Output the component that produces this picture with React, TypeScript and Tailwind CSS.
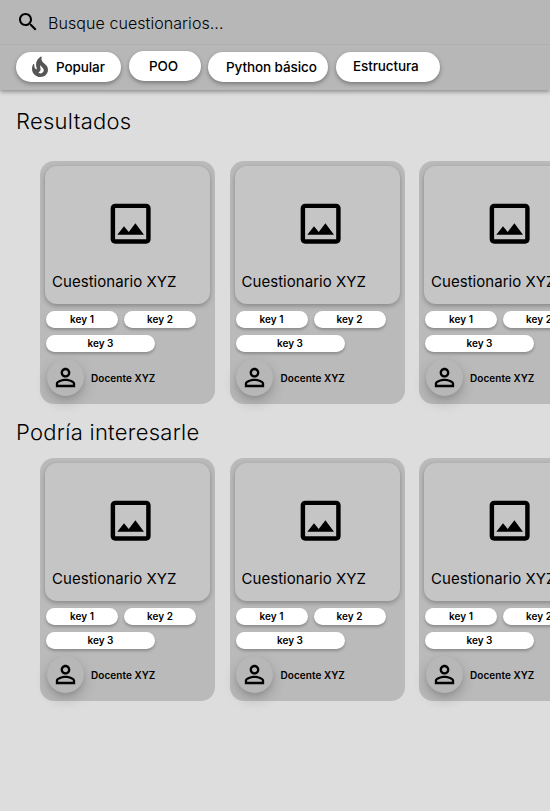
import React from 'react';

function SearchIcon() {
  return (
    <svg viewBox="0 0 24 24" className="h-6 w-6 shrink-0 fill-black">
      <path d="M15.5 14h-.79l-.28-.27C15.41 12.59 16 11.11 16 9.5 16 5.91 13.09 3 9.5 3S3 5.91 3 9.5 5.91 16 9.5 16c1.61 0 3.09-.59 4.23-1.57l.27.28v.79l5 4.99L20.49 19l-4.99-5zm-6 0C7.01 14 5 11.99 5 9.5S7.01 5 9.5 5 14 7.01 14 9.5 11.99 14 9.5 14z" />
    </svg>
  );
}

function FlameIcon() {
  return (
    <svg viewBox="0 0 24 24" className="h-6 w-6 shrink-0 fill-[#555]">
      <path d="M19.48 12.35c-1.57-4.08-7.16-4.3-5.81-10.23.1-.44-.37-.78-.75-.55C9.29 3.71 6.68 8 8.87 13.62c.18.46-.36.89-.75.59-1.81-1.37-2-3.34-1.84-4.75.06-.52-.62-.77-.91-.34C4.69 10.16 4 11.84 4 14.37c.38 5.6 5.11 7.32 6.81 7.54 2.43.31 5.06-.14 6.95-1.87 2.08-1.93 2.84-5.01 1.72-7.69zm-9.28 5.03c1.44-.35 2.18-1.39 2.38-2.31.33-1.43-.96-2.83-.09-5.09.33 1.87 3.27 3.04 3.27 5.08.08 2.53-2.66 4.7-5.56 2.32z" />
    </svg>
  );
}

function PictureIcon() {
  return (
    <svg viewBox="0 0 24 24" className="ml-[59px] h-[53.3px] w-[53.3px] fill-black">
      <path d="M19 5v14H5V5h14m0-2H5c-1.1 0-2 .9-2 2v14c0 1.1.9 2 2 2h14c1.1 0 2-.9 2-2V5c0-1.1-.9-2-2-2zm-4.86 8.86l-3 3.87L9 13.14 6 17h12l-3.86-5.14z" />
    </svg>
  );
}

function PersonIcon() {
  return (
    <svg viewBox="0 0 24 24" className="h-[29px] w-[29px] fill-black">
      <path d="M12 5.9c1.16 0 2.1.94 2.1 2.1s-.94 2.1-2.1 2.1S9.9 9.16 9.9 8s.94-2.1 2.1-2.1m0 9c2.97 0 6.1 1.46 6.1 2.1v1.1H5.9V17c0-.64 3.13-2.1 6.1-2.1M12 4C9.79 4 8 5.79 8 8s1.79 4 4 4 4-1.79 4-4-1.79-4-4-4zm0 9c-2.67 0-8 1.34-8 4v3h16v-3c0-2.66-5.33-4-8-4z" />
    </svg>
  );
}

const chip =
  'flex h-[30px] shrink-0 items-center rounded-full bg-white text-[13.5px] font-medium tracking-[-0.1px] shadow-[0_2px_4px_rgba(0,0,0,0.35)]';
const tag =
  'flex h-[17px] items-center justify-center rounded-full bg-white pb-px text-[10px] leading-none font-semibold shadow-[0_2px_3px_rgba(0,0,0,0.25)]';

function Card() {
  return (
    <article className="h-[243px] w-[175px] shrink-0 rounded-[14px] bg-[#bababa] p-[5px]">
      <div className="h-[138px] w-[165px] rounded-[12px] bg-[#c5c5c5] pt-[31px] shadow-[0_2px_5px_rgba(0,0,0,0.28)]">
        <PictureIcon />
        <h3 className="mt-[22px] ml-[7px] text-[15px] leading-[20px] tracking-[0.04px] whitespace-nowrap">Cuestionario XYZ</h3>
      </div>
      <div className="mt-[7px] ml-px flex flex-wrap gap-x-[6px] gap-y-[7px]">
        <span className={`${tag} w-[72px]`}>key 1</span>
        <span className={`${tag} w-[72px]`}>key 2</span>
        <span className={`${tag} w-[109px]`}>key 3</span>
      </div>
      <div className="mt-[7px] ml-[1.5px] flex items-center">
        <div className="flex h-[37px] w-[37px] items-center justify-center rounded-full bg-[#b7b7b7] shadow-[0_6px_14px_rgba(0,0,0,0.2),0_2px_4px_rgba(0,0,0,0.08)]">
          <PersonIcon />
        </div>
        <span className="ml-[7.5px] pt-[2px] text-[10px] font-semibold tracking-[0.05px] whitespace-nowrap">Docente XYZ</span>
      </div>
    </article>
  );
}

function CardRow() {
  return (
    <div className="flex gap-[14.5px] overflow-hidden pb-4 pl-10">
      <Card />
      <Card />
      <Card />
    </div>
  );
}

export default function App() {
  return (
    <main className="h-[811px] w-[550px] overflow-hidden bg-[#ddd] font-['Inter',sans-serif] text-black">
      <header className="h-[90px] bg-[#b7b7b7] shadow-[0_2px_4px_rgba(0,0,0,0.35)]">
        <div className="flex h-[45px] items-center border-b border-[#b0b0b0] pl-4">
          <SearchIcon />
          <span className="ml-2 pt-[2px] text-[16px] font-light tracking-[0.07px]">Busque cuestionarios...</span>
        </div>
        <nav className="flex items-start pt-[7px] pl-4">
          <div className={`${chip} w-[105px] gap-[4px] pl-[12px]`}>
            <FlameIcon />
            <span className="pt-px">Popular</span>
          </div>
          <div className={`${chip} -mt-px ml-2 w-[72px] pl-5`}>POO</div>
          <div className={`${chip} ml-[7px] w-[120px] pt-px pl-[18px] whitespace-nowrap`}>Python básico</div>
          <div className={`${chip} ml-2 w-[104px] pb-px pl-[17px]`}>Estructura</div>
        </nav>
      </header>
      <section className="pt-[17px]">
        <h2 className="pl-4 text-[22px] leading-[28px] font-light tracking-[0.28px]">Resultados</h2>
        <div className="pt-[26px]">
          <CardRow />
        </div>
      </section>
      <section>
        <h2 className="-mt-[2px] pl-4 text-[22px] leading-[28px] font-light tracking-[0.28px]">Podría interesarle</h2>
        <div className="pt-[12px]">
          <CardRow />
        </div>
      </section>
    </main>
  );
}
